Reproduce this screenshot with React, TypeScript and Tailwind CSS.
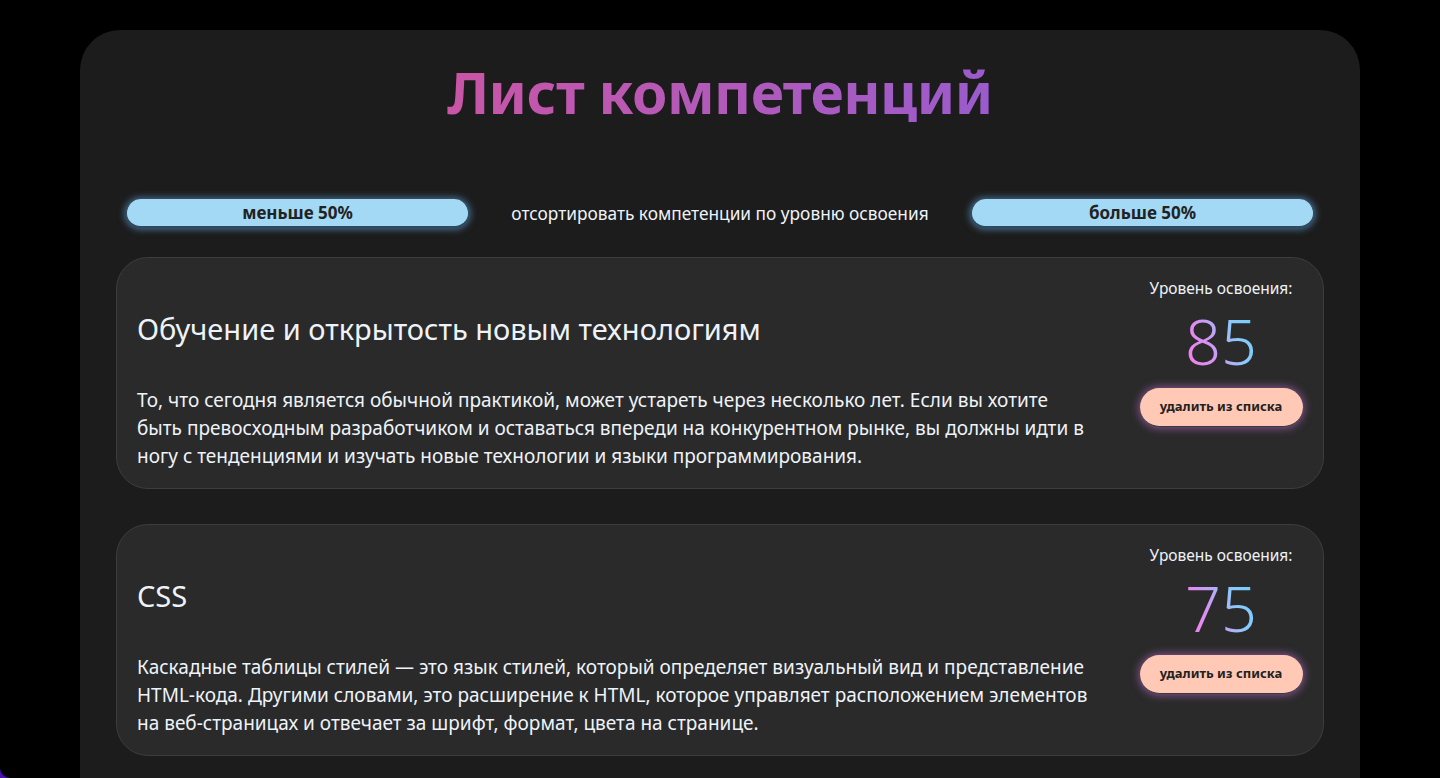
import React from "react";

const items = [
  {
    title: "Обучение и открытость новым технологиям",
    lines: [
      "То, что сегодня является обычной практикой, может устареть через несколько лет. Если вы хотите",
      "быть превосходным разработчиком и оставаться впереди на конкурентном рынке, вы должны идти в ногу с тенденциями и изучать новые технологии и языки программирования.",
    ],
    level: 85,
  },
  {
    title: "CSS",
    lines: [
      "Каскадные таблицы стилей — это язык стилей, который определяет визуальный вид и представление HTML-кода. Другими словами, это расширение к HTML, которое управляет расположением элементов на веб-страницах и отвечает за шрифт, формат, цвета на странице.",
    ],
    level: 75,
  },
];

export default function App() {
  return (
    <div
      className="min-h-screen bg-black overflow-hidden h-[778px] relative"
      style={{ fontFamily: '"Noto Sans", "Open Sans", sans-serif' }}
    >
      <div className="absolute left-0 bottom-0 w-[10px] h-[10px] bg-[#4a0fb0]" />
      <div className="absolute left-0 bottom-0 w-[10px] h-[10px] bg-black rounded-bl-[10px]" />
      <div className="mx-[80px] mt-[30px] bg-[#1c1c1c] rounded-[40px] pb-10 pt-[22px] px-[36px] min-h-[800px]">
        <h1 className="text-center text-[57px] font-bold leading-[80px] tracking-[-0.5px]">
          <span className="bg-gradient-to-r from-[#c955a6] to-[#9a5bcc] bg-clip-text text-transparent">
            Лист компетенций
          </span>
        </h1>
        <div className="mt-[67px] flex items-center justify-between px-[10px]">
          <button className="w-[343px] h-[29px] rounded-full bg-[#a3d9f5] border-b-2 border-r border-l border-[#2f4a5e] text-[#222] font-bold text-[17px] shadow-[0_0_6px_2px_rgba(90,150,200,0.6)]">
            меньше 50%
          </button>
          <span className="text-[#eef3fa] text-[17.3px]">отсортировать компетенции по уровню освоения</span>
          <button className="w-[343px] h-[29px] rounded-full bg-[#a3d9f5] border-b-2 border-r border-l border-[#2f4a5e] text-[#222] font-bold text-[17px] shadow-[0_0_6px_2px_rgba(90,150,200,0.6)]">
            больше 50%
          </button>
        </div>
        <div className="mt-[29px] flex flex-col gap-[35px]">
          {items.map((it) => (
            <div
              key={it.title}
              className="bg-[#2a2a2a] border border-[#3d3d3d] rounded-[32px] h-[232px] flex pl-[20px] pr-[20px] pt-[20px]"
            >
              <div className="flex-1 flex flex-col pr-[20px]">
                <div className="mt-[30px] text-[29px] leading-[42px] text-[#eef3fa]">{it.title}</div>
                <div className="mt-[36px] text-[19px] leading-[28px] text-[#eef3fa] max-w-[962px]">
                  {it.lines.map((l, i) => (
                    <React.Fragment key={i}>
                      {i > 0 && <br />}
                      {l}
                    </React.Fragment>
                  ))}
                </div>
              </div>
              <div className="w-[164px] flex flex-col items-center">
                <div className="text-[15.5px] leading-[20px] text-[#eef3fa]">Уровень освоения:</div>
                <div className="text-[63px] font-light leading-[86px]">
                  <span className="bg-[linear-gradient(70deg,#ff78e8_0%,#d892f4_35%,#8ec8fb_65%,#62d3ff_100%)] bg-clip-text text-transparent">
                    {it.level}
                  </span>
                </div>
                <button className="mt-[4px] w-[163px] h-[39px] shrink-0 rounded-full bg-[#ffc9b5] text-[#222] font-bold text-[13px] border-b border-[#3a3a3a] shadow-[0_0_8px_1px_rgba(190,110,210,0.65)]">
                  удалить из списка
                </button>
              </div>
            </div>
          ))}
        </div>
      </div>
    </div>
  );
}
